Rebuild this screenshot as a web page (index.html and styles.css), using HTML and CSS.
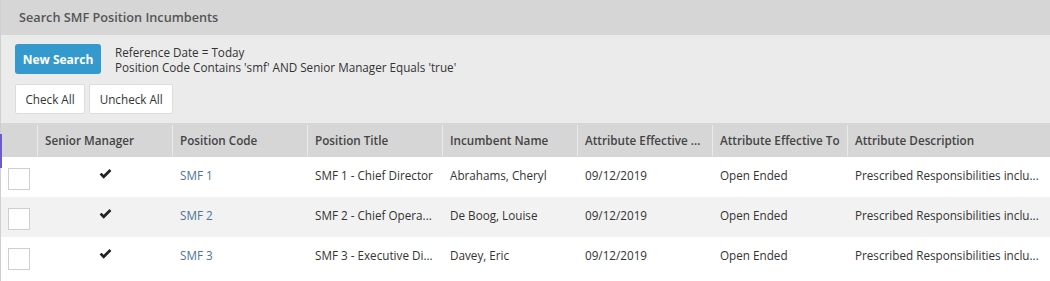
FILE: index.html
```html
<!DOCTYPE html>
<html>
<head>
    <title>Search SMF Position Incumbents</title>
    <link rel="stylesheet" href="styles.css">
</head>
<body>
<div class="panel">
    <div class="panelTitle">Search SMF Position Incumbents</div>
    <div class="panelBody">
        <div class="searchRow">
            <button class="btnPrimary">New Search</button>
            <div class="criteria">
                <div>Reference Date = Today</div>
                <div>Position Code Contains 'smf' AND Senior Manager Equals 'true'</div>
            </div>
        </div>
        <div class="checkRow">
            <button class="btnPlain">Check All</button>
            <button class="btnPlain">Uncheck All</button>
        </div>
    </div>

    <div class="grid">
        <div class="focusBar"></div>
        <div class="gridRow gridHead">
            <div class="cell"></div>
            <div class="cell">Senior Manager</div>
            <div class="cell">Position Code</div>
            <div class="cell">Position Title</div>
            <div class="cell">Incumbent Name</div>
            <div class="cell">Attribute Effective ...</div>
            <div class="cell">Attribute Effective To</div>
            <div class="cell">Attribute Description</div>
        </div>

        <div class="gridRow">
            <div class="cell boxCell"><span class="checkBox"></span></div>
            <div class="cell tickCell"><svg class="tick" viewBox="0 0 14 11"><path d="M0.5 6 L2.6 4 L5 6.4 L11.4 0 L13.5 2.1 L5 10.6 Z" fill="#222"/></svg></div>
            <div class="cell code">SMF 1</div>
            <div class="cell">SMF 1 - Chief Director</div>
            <div class="cell">Abrahams, Cheryl</div>
            <div class="cell">09/12/2019</div>
            <div class="cell">Open Ended</div>
            <div class="cell">Prescribed Responsibilities inclu...</div>
        </div>
        <div class="gridRow alt">
            <div class="cell boxCell"><span class="checkBox"></span></div>
            <div class="cell tickCell"><svg class="tick" viewBox="0 0 14 11"><path d="M0.5 6 L2.6 4 L5 6.4 L11.4 0 L13.5 2.1 L5 10.6 Z" fill="#222"/></svg></div>
            <div class="cell code">SMF 2</div>
            <div class="cell">SMF 2 - Chief Opera...</div>
            <div class="cell">De Boog, Louise</div>
            <div class="cell">09/12/2019</div>
            <div class="cell">Open Ended</div>
            <div class="cell">Prescribed Responsibilities inclu...</div>
        </div>
        <div class="gridRow">
            <div class="cell boxCell"><span class="checkBox"></span></div>
            <div class="cell tickCell"><svg class="tick" viewBox="0 0 14 11"><path d="M0.5 6 L2.6 4 L5 6.4 L11.4 0 L13.5 2.1 L5 10.6 Z" fill="#222"/></svg></div>
            <div class="cell code">SMF 3</div>
            <div class="cell">SMF 3 - Executive Di...</div>
            <div class="cell">Davey, Eric</div>
            <div class="cell">09/12/2019</div>
            <div class="cell">Open Ended</div>
            <div class="cell">Prescribed Responsibilities inclu...</div>
        </div>
    </div>
</div>
</body>
</html>
```

FILE: styles.css
```css
body {
    margin: 0;
    font-family: "Open Sans", "Noto Sans", sans-serif;
    font-size: 11.7px;
    color: #333;
    background: #fff;
}
.panel {
    border-left: 1px solid #cfcfcf;
    min-height: 281px;
}
.panelTitle {
    height: 35px;
    line-height: 35px;
    padding-left: 18px;
    background: #d6d6d6;
    color: #555;
    font-size: 12.7px;
    font-weight: 600;
}
.panelBody {
    background: #ebebeb;
    padding: 9px 14px 9px;
}
.searchRow {
    display: flex;
    align-items: flex-start;
    gap: 14px;
    height: 30px;
}
.criteria {
    line-height: 15px;
    padding-top: 1px;
    color: #333;
}
.btnPrimary {
    height: 30px;
    width: 86px;
    border: none;
    border-radius: 3px;
    background: #3499cc;
    color: #fff;
    font-family: inherit;
    font-size: 12px;
    font-weight: 700;
    padding: 0;
}
.checkRow {
    display: flex;
    gap: 4px;
    margin-top: 10px;
}
.btnPlain {
    height: 30px;
    padding: 0 9.5px;
    border: 1px solid #ddd;
    border-radius: 2px;
    background: #fff;
    color: #333;
    font-family: inherit;
    font-size: 11.7px;
}
.grid {
    position: relative;
}
.focusBar {
    position: absolute;
    left: -1px;
    top: 11px;
    width: 2px;
    height: 34px;
    background: #6a5ccb;
}
.gridRow {
    display: grid;
    grid-template-columns: 36px 135px 135px 135px 135px 135px 135px 1fr;
    height: 40px;
    box-sizing: border-box;
    padding-bottom: 4px;
    align-items: center;
    background: #fff;
}
.gridRow.alt {
    background: #f2f2f2;
}
.gridHead {
    height: 34px;
    padding-bottom: 0;
    background: #d6d6d6;
    color: #444;
    font-weight: 600;
}
.cell {
    padding-left: 7px;
    white-space: nowrap;
    overflow: hidden;
}
.gridHead .cell {
    height: 31px;
    line-height: 30px;
}
.gridHead .cell + .cell {
    border-left: 1px solid #eaeaea;
}
.gridRow:not(.gridHead) .cell + .cell {
    margin-left: 1px;
}
.boxCell {
    align-self: start;
    padding: 11px 0 0 7px;
}
.tickCell {
    align-self: start;
    padding: 12px 0 0 0;
    text-align: center;
}
.code {
    color: #4f7394;
}
.checkBox {
    display: block;
    width: 20px;
    height: 20px;
    border: 1px solid #cfcfcf;
    background: #fff;
}
.tick {
    width: 13px;
    height: 10px;
    display: inline-block;
    vertical-align: top;
}
```
